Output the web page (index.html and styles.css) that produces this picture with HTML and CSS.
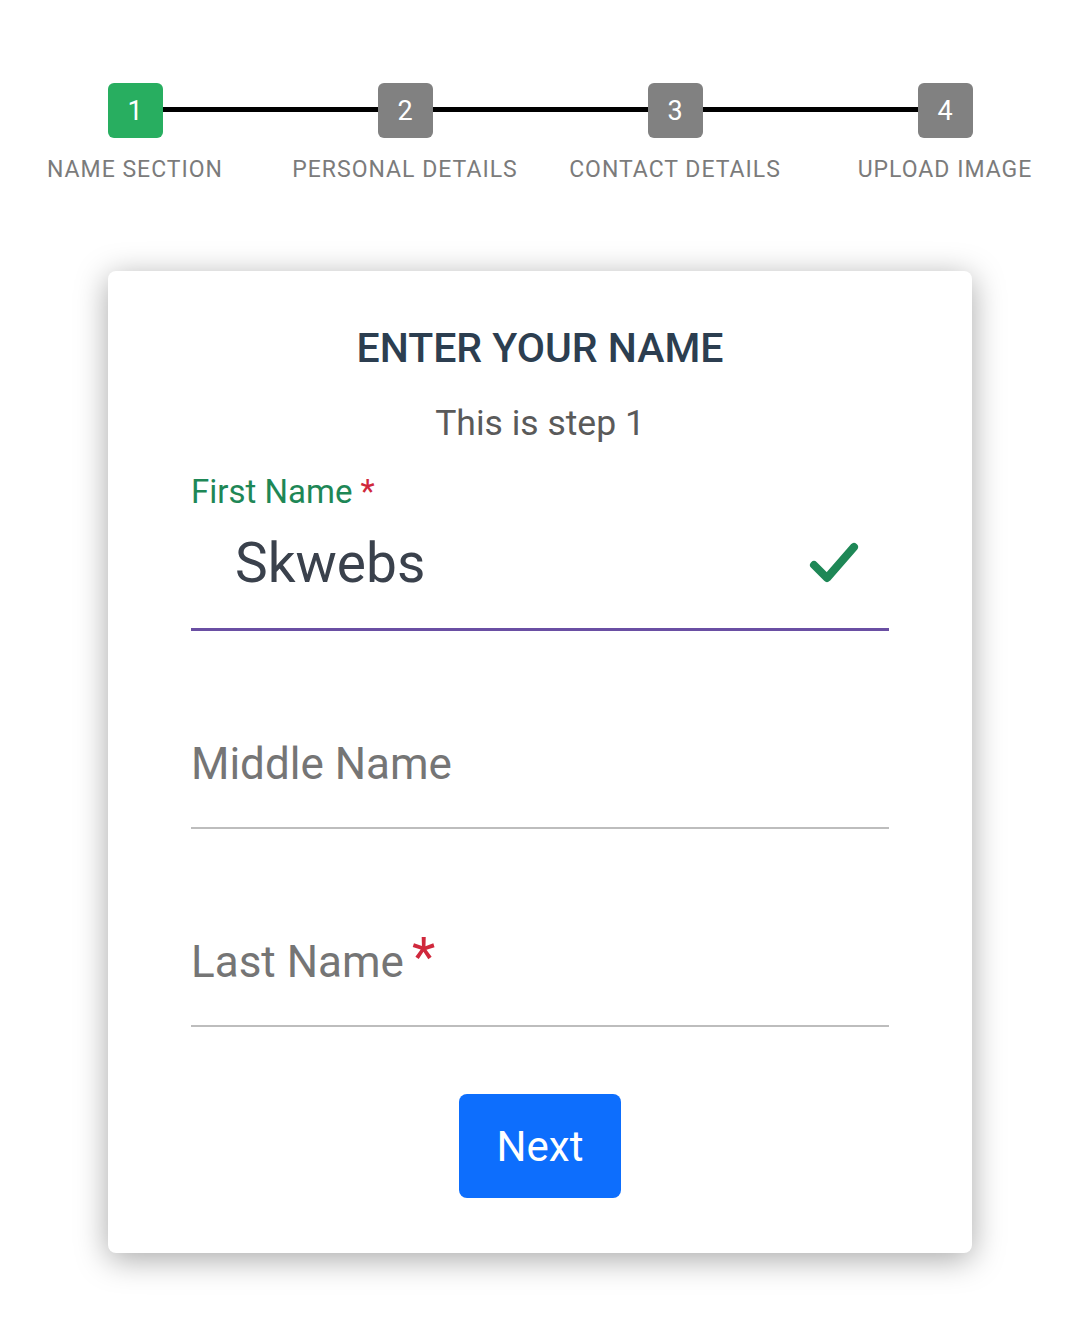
FILE: index.html
```html
<!DOCTYPE html>
<html>
<head>
<meta charset="utf-8">
<link rel="stylesheet" href="styles.css">
</head>
<body>
<div class="stepper">
  <div class="step active"><div class="num">1</div><div class="label">NAME SECTION</div></div>
  <div class="step"><div class="num">2</div><div class="label">PERSONAL DETAILS</div></div>
  <div class="step"><div class="num">3</div><div class="label">CONTACT DETAILS</div></div>
  <div class="step last"><div class="num">4</div><div class="label">UPLOAD IMAGE</div></div>
</div>
<div class="card">
  <h1 class="title">ENTER YOUR NAME</h1>
  <p class="subtitle">This is step 1</p>
  <div class="field filled">
    <div class="float-label">First Name <span class="req">*</span></div>
    <div class="input-row">
      <span class="value">Skwebs</span>
      <svg class="check" width="52" height="44" viewBox="0 0 52 44"><path d="M6 24 L19 37 L46 6" fill="none" stroke="#1e8756" stroke-width="8" stroke-linecap="round" stroke-linejoin="round"/></svg>
    </div>
  </div>
  <div class="field">
    <div class="placeholder">Middle Name</div>
  </div>
  <div class="field">
    <div class="placeholder">Last Name<span class="req big">*</span></div>
  </div>
  <div class="actions"><button class="btn">Next</button></div>
</div>
</body>
</html>
```
FILE: styles.css
```css
* { box-sizing: border-box; }
body {
  margin: 0;
  background: #fff;
  font-family: Roboto, "Noto Sans", "Liberation Sans", sans-serif;
  min-height: 1320px;
}
.stepper {
  display: grid;
  grid-template-columns: repeat(4, 270px);
  padding-top: 83px;
}
.step {
  position: relative;
  display: flex;
  flex-direction: column;
  align-items: center;
}
.step:not(.last)::after {
  content: "";
  position: absolute;
  left: 162px;
  width: 218px;
  top: 24px;
  height: 5px;
  background: #000;
}
.num {
  position: relative;
  z-index: 1;
  width: 55px;
  height: 55px;
  border-radius: 6px;
  background: #818181;
  color: #fff;
  font-size: 27px;
  display: flex;
  align-items: center;
  justify-content: center;
}
.step.active .num { background: #28ae60; }
.label {
  margin-top: 18px;
  font-size: 23px;
  line-height: 28px;
  letter-spacing: 1px;
  color: #7b7b7b;
  white-space: nowrap;
}
.card {
  width: 864px;
  margin: 87px auto 68px;
  background: #fff;
  border-radius: 8px;
  box-shadow: 0 6px 32px rgba(0, 0, 0, 0.35);
  padding: 53px 83px 55px;
}
.title {
  margin: 0;
  text-align: center;
  font-size: 41px;
  line-height: 48px;
  font-weight: 500;
  color: #2c3e50;
}
.subtitle {
  margin: 30px 0 0;
  text-align: center;
  font-size: 35.5px;
  line-height: 42px;
  color: #5a5a5a;
}
.field {
  border-bottom: 2px solid #bdbdbd;
  margin-top: 107px;
  padding-bottom: 37px;
}
.field.filled {
  margin-top: 29px;
  border-bottom: 3px solid #6a4fa3;
  padding-bottom: 32px;
}
.float-label {
  font-size: 33px;
  line-height: 38px;
  color: #1e8756;
}
.req { color: #d0283c; }
.req.big { font-size: 54px; vertical-align: 2px; margin-left: 8px; line-height: 0; }
.input-row {
  margin-top: 19px;
  display: flex;
  align-items: center;
  justify-content: space-between;
  padding-left: 44px;
  padding-right: 29px;
}
.value {
  font-size: 55px;
  line-height: 66px;
  color: #3a414c;
}
.check { display: block; }
.placeholder {
  font-size: 44px;
  line-height: 52px;
  color: #757575;
}
.actions {
  display: flex;
  justify-content: center;
  margin-top: 67px;
}
.btn {
  width: 162px;
  height: 104px;
  border: none;
  border-radius: 8px;
  background: #0d6efd;
  color: #fff;
  font-family: inherit;
  font-size: 42px;
  padding: 0;
}
```
